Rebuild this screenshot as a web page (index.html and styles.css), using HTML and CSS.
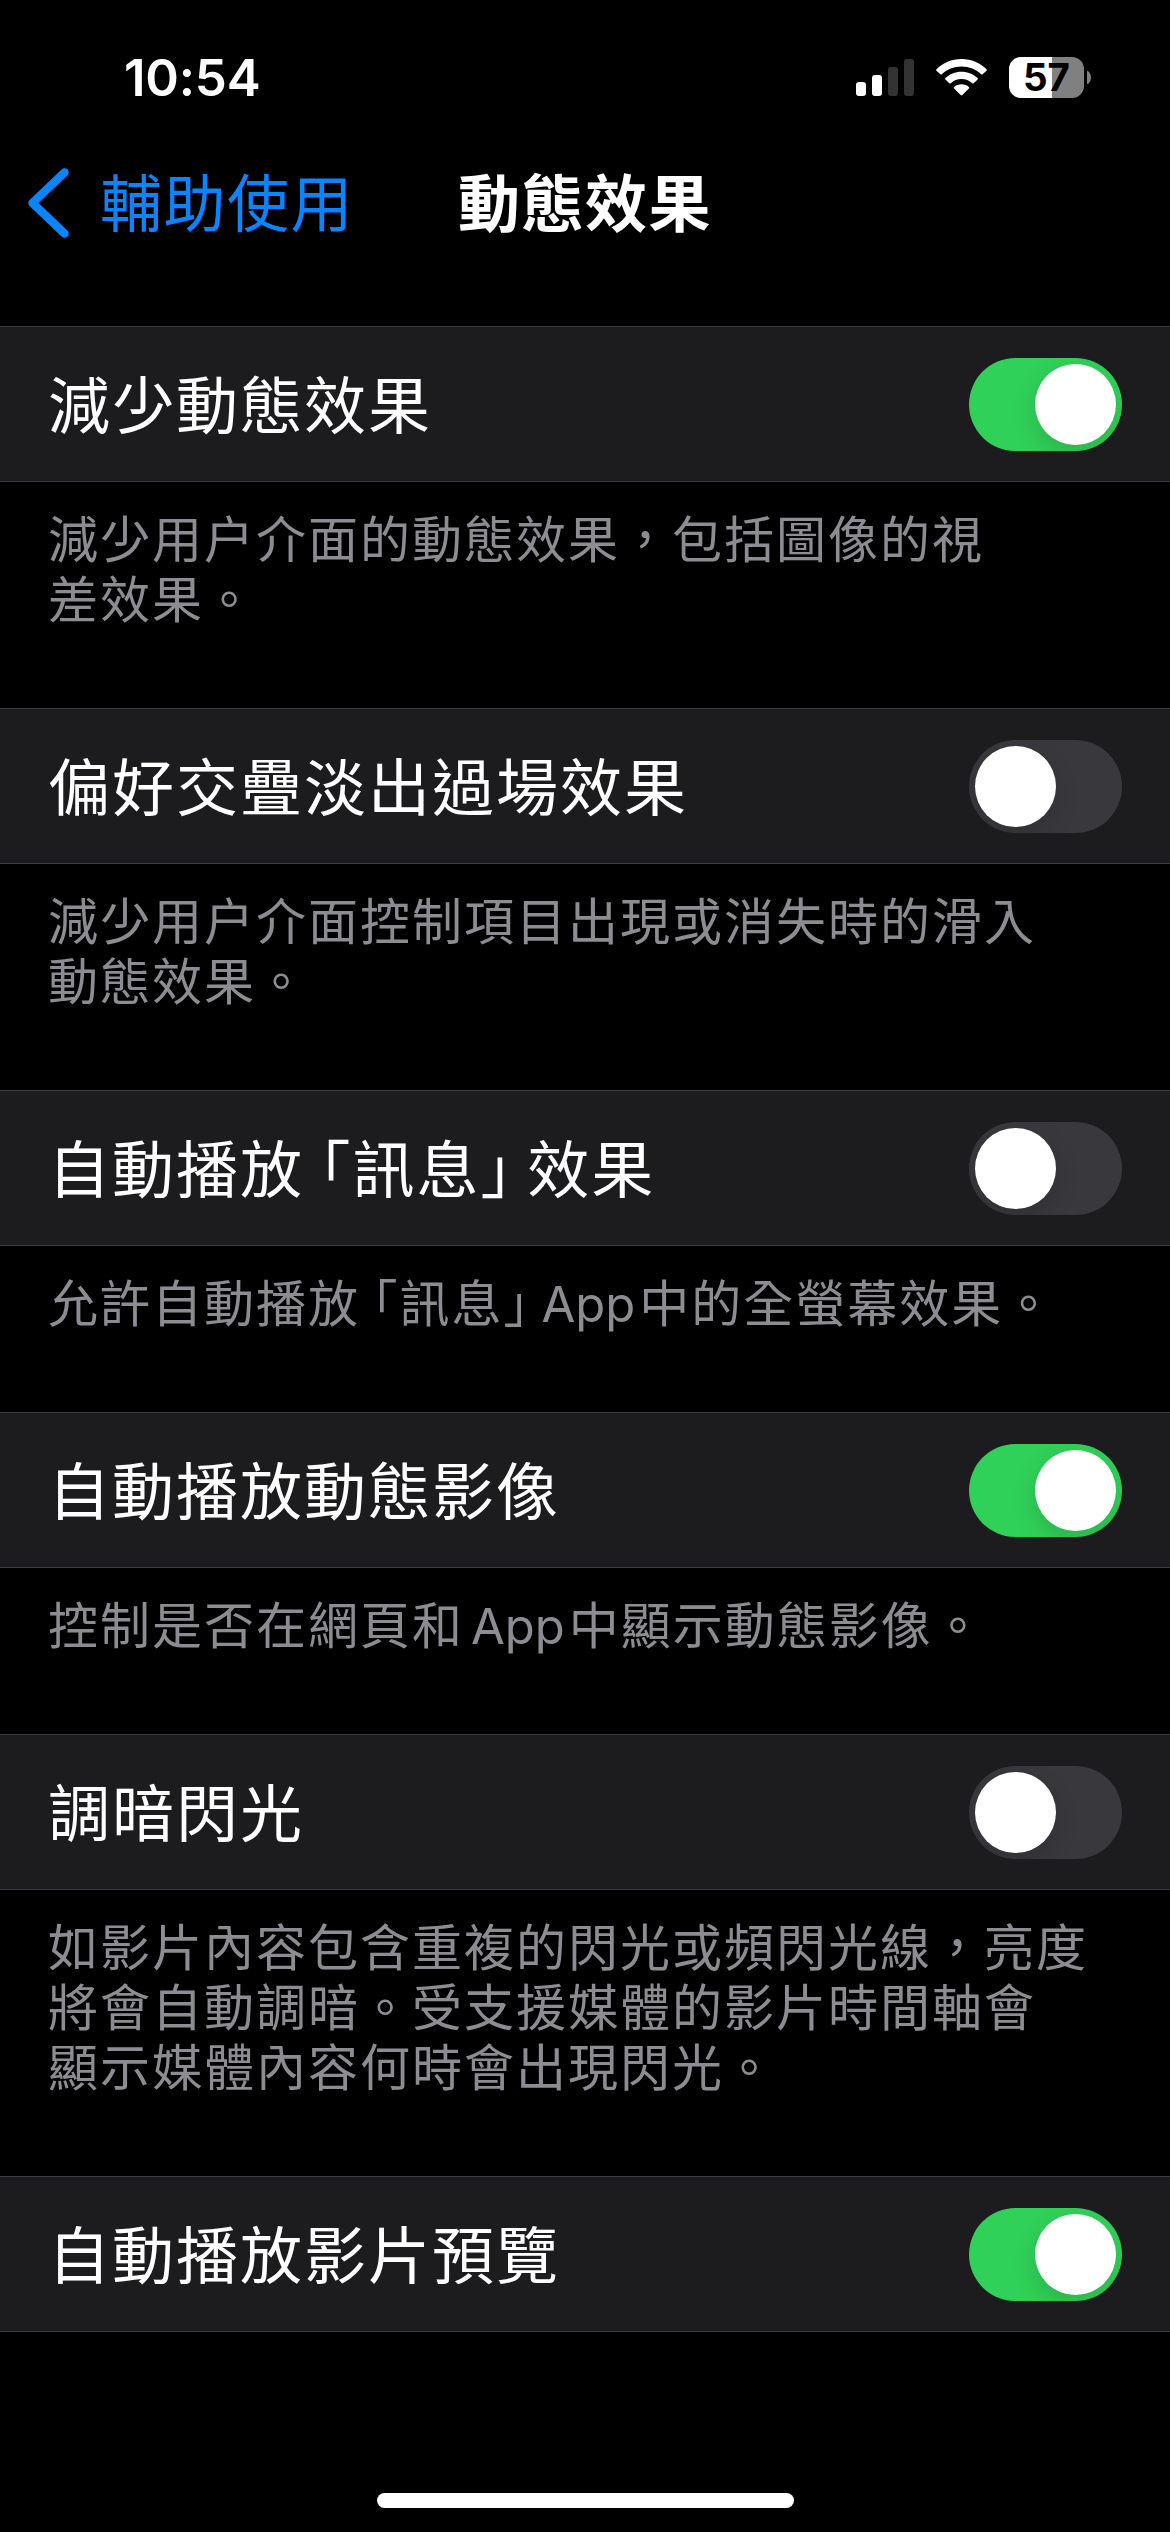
FILE: index.html
```html
<!DOCTYPE html>
<html lang="zh-HK">
<head>
<meta charset="utf-8">
<title>動態效果</title>
<link rel="stylesheet" href="styles.css">
</head>
<body>
<div class="screen">
  <header class="status-bar">
    <span class="clock">10:54</span>
    <div class="indicators">
      <svg class="signal" width="58" height="37" viewBox="0 0 58 37">
        <rect x="0" y="23" width="10" height="14" rx="3" fill="#fff"/>
        <rect x="16" y="16" width="10" height="21" rx="3" fill="#fff"/>
        <rect x="32" y="8" width="10" height="29" rx="3" fill="#333"/>
        <rect x="48" y="0" width="10" height="37" rx="3" fill="#333"/>
      </svg>
      <svg class="wifi" width="51" height="37" viewBox="0 0 51 37" fill="#fff">
        <path d="M25.5 0C35.300 0 44.200 3.900 50.500 10.200Q51.200 11 50.500 11.800L46.600 15.300Q45.900 15.900 45.200 15.300C40.200 10.500 33.200 7.500 25.500 7.500S10.800 10.500 5.800 15.300Q5.100 15.900 4.400 15.300L0.500 11.800Q-.2 11 .5 10.200C6.800 3.900 15.700 0 25.500 0Z"/>
        <path d="M25.500 12.700C31.800 12.700 37.400 15.100 41.600 19Q42.300 19.700 41.600 20.400L37.700 24.200Q37 24.800 36.300 24.200C33.400 21.700 29.700 20.100 25.500 20.100S17.600 21.700 14.700 24.200Q14 24.800 13.300 24.200L9.400 20.400Q8.700 19.700 9.400 19C13.600 15.100 19.200 12.700 25.500 12.700Z"/>
        <path d="M25.500 25.300C28.300 25.300 30.900 26.300 32.900 28Q33.600 28.700 32.900 29.400L26.400 36Q25.500 36.900 24.600 36L18.100 29.400Q17.400 28.700 18.100 28C20.100 26.300 22.700 25.300 25.500 25.300Z"/>
      </svg>
      <div class="battery">
        <span class="battery-body">57</span>
        <span class="battery-cap"></span>
      </div>
    </div>
  </header>

  <nav class="nav-bar">
    <a class="back">
      <svg class="chevron" width="42" height="70" viewBox="0 0 42 70">
        <path d="M36.500 4.500L4.500 35L36.500 65.500" fill="none" stroke="#0a84ff" stroke-width="8.500" stroke-linecap="round" stroke-linejoin="round"/>
      </svg>
      <span class="back-label">輔助使用</span>
    </a>
    <h1 class="nav-title">動態效果</h1>
  </nav>

  <main class="settings">
    <section class="group">
      <div class="row"><span class="label">減少動態效果</span><span class="switch on"><span class="knob"></span></span></div>
      <p class="note">減少用户介面的動態效果，包括圖像的視<br>差效果。</p>
    </section>
    <section class="group">
      <div class="row"><span class="label">偏好交疊淡出過場效果</span><span class="switch"><span class="knob"></span></span></div>
      <p class="note">減少用户介面控制項目出現或消失時的滑入<br>動態效果。</p>
    </section>
    <section class="group">
      <div class="row"><span class="label">自動播放<span class="open">「</span>訊息<span class="close">」</span>效果</span><span class="switch"><span class="knob"></span></span></div>
      <p class="note">允許自動播放<span class="open">「</span>訊息<span class="close">」</span><span class="latin">App</span>中的全螢幕效果。</p>
    </section>
    <section class="group">
      <div class="row"><span class="label">自動播放動態影像</span><span class="switch on"><span class="knob"></span></span></div>
      <p class="note">控制是否在網頁和<span class="latin spaced">App</span>中顯示動態影像。</p>
    </section>
    <section class="group">
      <div class="row"><span class="label">調暗閃光</span><span class="switch"><span class="knob"></span></span></div>
      <p class="note">如影片內容包含重複的閃光或頻閃光線，亮度<br>將會自動調暗。受支援媒體的影片時間軸會<br>顯示媒體內容何時會出現閃光。</p>
    </section>
    <section class="group">
      <div class="row"><span class="label">自動播放影片預覽</span><span class="switch on"><span class="knob"></span></span></div>
    </section>
  </main>

  <footer class="home"><span class="home-bar"></span></footer>
</div>
</body>
</html>
```
FILE: styles.css
```css
* { box-sizing: border-box; }

body {
  margin: 0;
  background: #000;
  color: #fff;
  font-family: "Noto Sans CJK TC", sans-serif;
}

.screen {
  display: flex;
  flex-direction: column;
  width: 1170px;
  height: 2532px;
  overflow: hidden;
}

.status-bar {
  display: flex;
  justify-content: space-between;
  align-items: center;
  height: 155px;
  padding: 0 79px 0 124px;
}

.clock {
  font: 600 51px/60px Inter, sans-serif;
  letter-spacing: -0.2px;
}

.indicators { display: flex; align-items: center; }
.wifi { margin-left: 22px; }

.battery {
  display: flex;
  align-items: center;
  gap: 3px;
  margin-left: 22px;
}

.battery-body {
  width: 75px;
  height: 41px;
  border-radius: 12px;
  background: linear-gradient(90deg, #fff 43px, #808080 43px);
  color: #000;
  font: 700 38.500px/41px Inter, sans-serif;
  text-align: center;
}

.battery-cap {
  width: 4px;
  height: 13px;
  border-radius: 0 4px 4px 0 / 0 6.500px 6.500px 0;
  background: #808080;
}

.nav-bar {
  display: grid;
  grid-template-columns: 1fr auto 1fr;
  align-items: center;
  height: 171px;
  padding: 0 28px 75px;
}

.back {
  display: flex;
  align-items: center;
  gap: 30px;
  color: #0a84ff;
}

.back-label,
.nav-title {
  margin: 0;
  padding-bottom: 7px;
  font-size: 62px;
  line-height: 86px;
  letter-spacing: 1.500px;
  white-space: nowrap;
}

.back-label { font-weight: 400; }
.nav-title { font-weight: 700; }

.settings { flex: 1; }

.row {
  display: flex;
  justify-content: space-between;
  align-items: center;
  height: 156px;
  padding: 0 48px;
  border: solid #3d3d41;
  border-width: 1px 0;
  background: #1c1c1e;
}

.label {
  padding-bottom: 5px;
  font-size: 62px;
  line-height: 90px;
  letter-spacing: 2px;
  white-space: nowrap;
}

.note {
  margin: 0;
  padding: 24px 48px 82px;
  color: #8d8c93;
  font-size: 50px;
  line-height: 60px;
  letter-spacing: 2px;
  white-space: nowrap;
}

/* Corner brackets take half-width forms with a quarter-em gap outside. */
.open,
.close { font-feature-settings: "halt"; }
.open { margin-left: 0.25em; }
.close { margin-right: 0.22em; }

.latin {
  margin-right: 4px;
  font-family: Inter, sans-serif;
  font-size: 49px;
  line-height: 0;
  letter-spacing: 0;
}

.spaced { margin-left: 7px; }

.switch {
  display: flex;
  width: 153px;
  height: 93px;
  padding: 6px;
  border-radius: 47px;
  background: #39393d;
  overflow: hidden;
}

.switch.on {
  justify-content: flex-end;
  background: #30d158;
}

.knob {
  width: 81px;
  height: 81px;
  border-radius: 50%;
  background: #fff;
  box-shadow: 0 9px 24px rgba(0, 0, 0, 0.15);
}

.home {
  display: flex;
  justify-content: center;
  height: 39px;
}

.home-bar {
  width: 417px;
  height: 15px;
  border-radius: 8px;
  background: #fff;
}
```
